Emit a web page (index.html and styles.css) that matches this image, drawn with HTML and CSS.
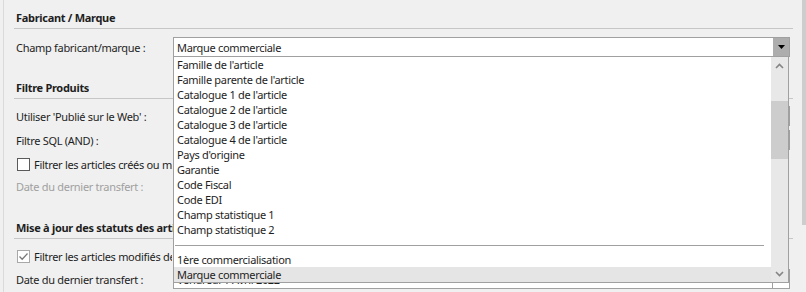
FILE: index.html
```html
<!DOCTYPE html>
<html lang="fr">
<head>
<meta charset="UTF-8">
<title>Paramètres articles</title>
<link rel="stylesheet" href="styles.css">
</head>
<body>

<div class="page">

<!-- FABRICANT -->
<section class="group group-fabricant">
<h2 class="group-title">Fabricant / Marque</h2>
<div class="row row-combo">
<label class="label">Champ fabricant/marque :</label>
<div class="field combo">
<span class="field-text">Marque commerciale</span>
<span class="combo-btn"><svg width="7" height="4" viewBox="0 0 7 4"><path d="M0 0h7L3.5 4z" fill="#000"/></svg></span>

<!-- LISTE OUVERTE -->
<div class="dropdown">
<ul class="dropdown-list">
<li>Famille de l'article</li>
<li>Famille parente de l'article</li>
<li>Catalogue 1 de l'article</li>
<li>Catalogue 2 de l'article</li>
<li>Catalogue 3 de l'article</li>
<li>Catalogue 4 de l'article</li>
<li>Pays d'origine</li>
<li>Garantie</li>
<li>Code Fiscal</li>
<li>Code EDI</li>
<li>Champ statistique 1</li>
<li>Champ statistique 2</li>
<li class="sep"></li>
<li>1ère commercialisation</li>
<li class="selected">Marque commerciale</li>
</ul>
<div class="list-scroll">
<span class="arrow"><svg width="9" height="6" viewBox="0 0 9 6"><path d="M1 5L4.5 1.5L8 5" fill="none" stroke="#858585" stroke-width="1.6"/></svg></span>
<div class="track"><div class="thumb"></div></div>
<span class="arrow"><svg width="9" height="6" viewBox="0 0 9 6"><path d="M1 1L4.5 4.5L8 1" fill="none" stroke="#858585" stroke-width="1.6"/></svg></span>
</div>
</div>
</div>
</div>
</section>

<!-- FILTRE -->
<section class="group group-filtre">
<h2 class="group-title"><span class="title-text">Filtre Produits</span></h2>
<div class="row">
<label class="label">Utiliser 'Publié sur le Web' :</label>
<div class="field"></div>
</div>
<div class="row">
<label class="label">Filtre SQL (AND) :</label>
<div class="field"></div>
</div>
<div class="row">
<span class="check"></span>
<span class="check-text">Filtrer les articles créés ou modifiés depuis le dernier transfert</span>
</div>
<div class="row row-date">
<label class="label disabled">Date du dernier transfert :</label>
</div>
</section>

<!-- STATUTS -->
<section class="group group-statuts">
<h2 class="group-title"><span class="title-text">Mise à jour des statuts des articles</span></h2>
<div class="row">
<span class="check checked"><svg width="11" height="11" viewBox="0 0 11 11"><path d="M1.5 5.5L4.2 8.3L9.5 2.5" fill="none" stroke="#7a7a7a" stroke-width="1.3"/></svg></span>
<span class="check-text">Filtrer les articles modifiés depuis le dernier transfert</span>
</div>
<div class="row row-date">
<label class="label">Date du dernier transfert :</label>
<div class="field combo">
<span class="field-text">Vendredi 1 Avril 2022</span>
<span class="combo-btn combo-btn-date"></span>
</div>
</div>
</section>

</div>

<div class="vscroll"><div class="vscroll-thumb"></div></div>

</body>
</html>
```

FILE: styles.css
```css
body{
margin:0;
height:292px;
overflow:hidden;
display:flex;
background:#f0f0f0;
font-family:"Noto Sans",sans-serif;
font-size:11px;
letter-spacing:-0.3px;
color:#1e1e1e;
}

/* PAGE */
.page{
flex:1;
margin-left:3px;
border-left:1px solid #dadada;
padding:0 9px 0 10px;
}

/* BARRE FENETRE */
.vscroll{width:4px;background:#f0f0f0;}
.vscroll-thumb{height:225px;background:#cdcdcd;}

/* GROUPES */
.group-title{
margin:0;
font-size:11px;
font-weight:bold;
line-height:16px;
padding:0 0 2px 2px;
border-bottom:1px solid #c6c6c6;
white-space:nowrap;
}
.title-text{
display:inline-block;
max-width:157px;
overflow:hidden;
vertical-align:top;
}
.group-fabricant .group-title{padding-top:10px;}
.group-filtre .group-title{padding-top:23px;}
.group-statuts .group-title{padding-top:24px;}

.group-filtre .group-title + .row,
.group-statuts .group-title + .row{margin-top:5px;}

/* LIGNES */
.row{
display:flex;
align-items:center;
height:24px;
padding-left:2px;
white-space:nowrap;
}
.row-combo{margin-top:8px;height:20px;}
.group-filtre .row-date{height:20px;}
.group-statuts .row-date{height:22px;}

.label{width:157px;flex:none;}
.disabled{color:#a0a0a0;}

/* CHAMPS */
.field{
flex:1;
box-sizing:border-box;
height:20px;
margin-right:3px;
border:1px solid #a0a0a0;
background:#fff;
display:flex;
align-items:center;
}
.field-text{flex:1;padding-left:3px;}
.combo{position:relative;}
.combo-btn{
width:16px;
align-self:stretch;
background:#adadad;
display:flex;
align-items:center;
justify-content:center;
}
.combo-btn-date{background:#fff;border-left:1px solid #a0a0a0;}

/* CASES */
.check{
width:11px;
height:11px;
flex:none;
margin:0 4px 0 1px;
border:1px solid #5a5a5a;
background:#fff;
display:flex;
}
.check.checked{border-color:#a8a8a8;}
.check-text{
width:138px;
overflow:hidden;
}

/* LISTE DEROULANTE */
.dropdown{
position:absolute;
top:100%;
left:-1px;
width:calc(100% + 1px);
height:227px;
box-sizing:border-box;
border:1px solid #a0a0a0;
background:#fff;
display:flex;
z-index:5;
}
.dropdown-list{
flex:1;
margin:0;
padding:0;
list-style:none;
}
.dropdown-list li{
height:15px;
line-height:15px;
padding-left:3px;
}
.dropdown-list .sep{
padding:0;
margin:0 7px 6px 1px;
height:9px;
box-sizing:border-box;
border-bottom:1px solid #a0a0a0;
}
.dropdown-list .selected{background:#e5e5e5;}

.list-scroll{
width:17px;
background:#e8e8e8;
display:flex;
flex-direction:column;
}
.arrow{
height:17px;
display:flex;
align-items:center;
justify-content:center;
}
.track{flex:1;padding-top:27px;}
.thumb{height:58px;background:#cdcdcd;}
```
